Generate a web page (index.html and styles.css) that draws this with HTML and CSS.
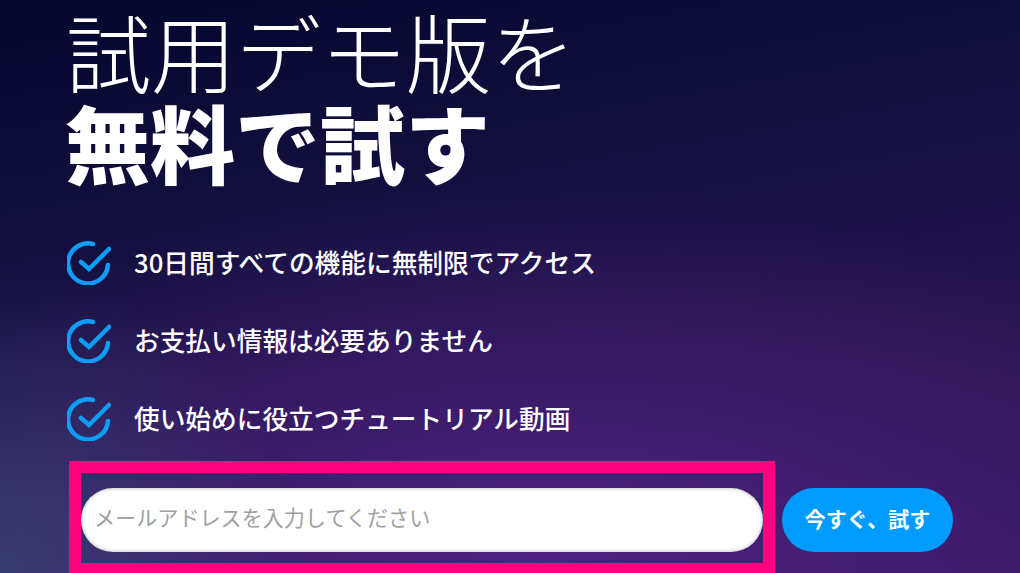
FILE: index.html
```html
<!DOCTYPE html>
<html lang="ja">
<head>
  <meta charset="UTF-8">
  <meta name="viewport" content="width=device-width, initial-scale=1.0">
  <title>試用デモ版を無料で試す</title>
  <link rel="stylesheet" href="styles.css">
</head>
<body>
  <main class="hero">
    <h1 class="title">
      <span class="title-light">試用デモ版を</span>
      <span class="title-bold">無料で試す</span>
    </h1>
    <ul class="features">
      <li class="feature">
        <svg class="check" viewBox="0 0 44 44"><path d="M41 24 A20 20 0 1 1 26 3"/><path d="M14 21 L22 28 L42 8"/></svg>
        <span>30日間すべての機能に無制限でアクセス</span>
      </li>
      <li class="feature">
        <svg class="check" viewBox="0 0 44 44"><path d="M41 24 A20 20 0 1 1 26 3"/><path d="M14 21 L22 28 L42 8"/></svg>
        <span>お支払い情報は必要ありません</span>
      </li>
      <li class="feature">
        <svg class="check" viewBox="0 0 44 44"><path d="M41 24 A20 20 0 1 1 26 3"/><path d="M14 21 L22 28 L42 8"/></svg>
        <span>使い始めに役立つチュートリアル動画</span>
      </li>
    </ul>
    <form class="signup" action="">
      <div class="highlight">
        <input class="email" type="text" placeholder="メールアドレスを入力してください">
      </div>
      <button class="submit" type="button">今すぐ、試す</button>
    </form>
  </main>
</body>
</html>
```

FILE: styles.css
```css
* {
  margin: 0;
  padding: 0;
  box-sizing: border-box;
}

html,
body {
  height: 100%;
  overflow: hidden;
}

body {
  font-family: "Noto Sans CJK JP", "Noto Sans", sans-serif;
  color: #fff;
  background-color: #05082f;
  background-image:
    radial-gradient(ellipse 300px 300px at 0 573px, rgba(60, 95, 130, 0.5), rgba(60, 95, 130, 0)),
    radial-gradient(ellipse 760px 380px at 540px 570px, #4f2180, rgba(79, 33, 128, 0)),
    linear-gradient(170deg, #04072e 0%, #13103f 35%, #281552 70%, #361860 100%);
}

.hero {
  padding: 0 0 0 65px;
}

.title {
  display: flex;
  flex-direction: column;
  font-size: 85px;
  line-height: 88px;
  padding-top: 6px;
}

.title-light {
  font-weight: 300;
  padding-left: 1px;
}

.title-bold {
  font-weight: 900;
  margin-top: 3px;
}

.features {
  list-style: none;
  margin-top: 54px;
  padding-left: 2px;
}

.feature {
  display: flex;
  align-items: center;
  gap: 23px;
  height: 44px;
  margin-bottom: 34px;
  font-size: 25.7px;
  font-weight: 500;
}

.check {
  width: 44px;
  height: 44px;
  margin-top: 3px;
  flex: none;
  fill: none;
  stroke: #0d9df5;
  stroke-width: 4.5;
  stroke-linecap: round;
}

.signup {
  display: flex;
  margin-top: -12.5px;
  margin-left: 4px;
}

.highlight {
  width: 706px;
  height: 114px;
  padding: 15px 0 0;
  border: 12px solid #ff007f;
  flex: none;
}

.email {
  display: block;
  width: 100%;
  height: 64px;
  padding: 0 13px 5px;
  border: 0;
  border-radius: 32px;
  background: #fff;
  box-shadow: inset 0 0 4px rgba(0, 0, 0, 0.3);
  font-family: inherit;
  font-size: 21.1px;
  outline: none;
}

.email::placeholder {
  color: #a0a0a0;
}

.submit {
  width: 171px;
  height: 64px;
  margin: 27px 0 0 7px;
  padding-bottom: 3px;
  border: 0;
  border-radius: 32px;
  background: #009bff;
  color: #fff;
  font-family: inherit;
  font-size: 21px;
  font-weight: 700;
}
```
